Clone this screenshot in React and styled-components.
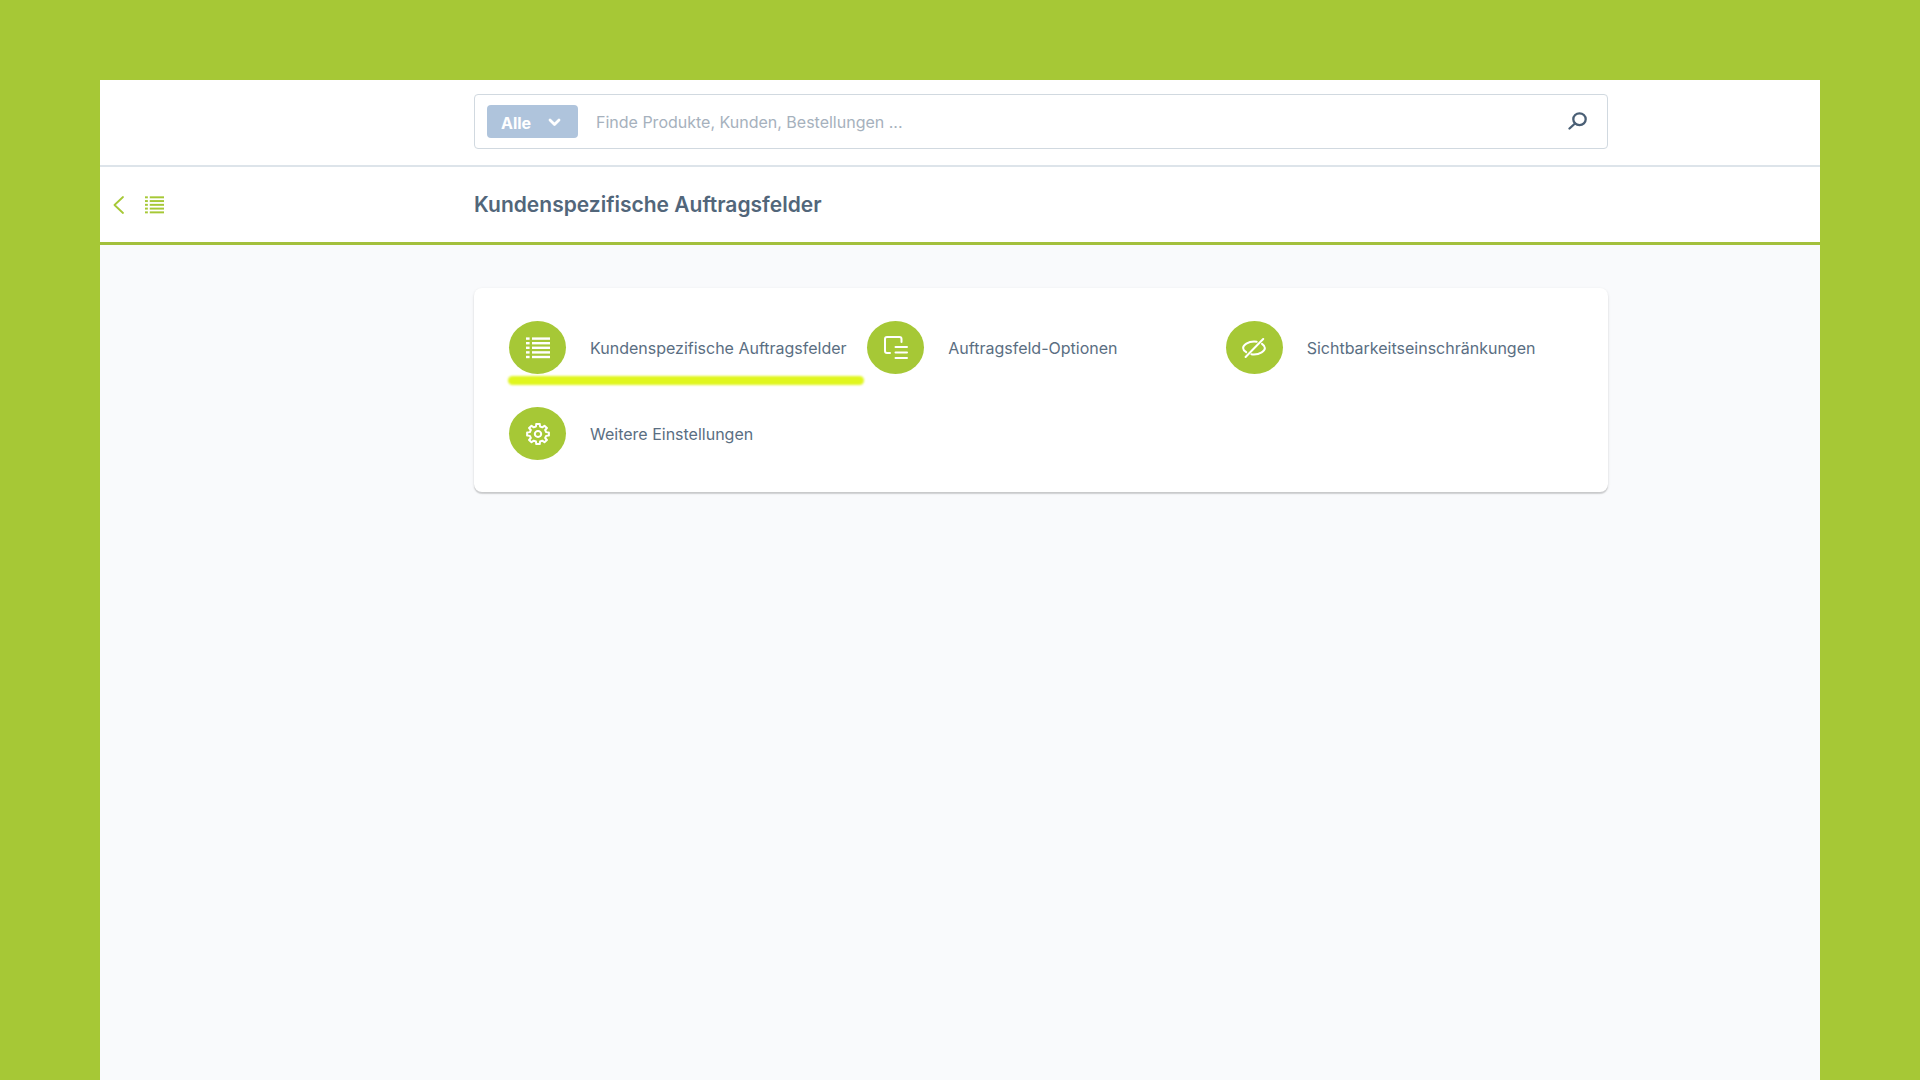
import styled, { createGlobalStyle } from 'styled-components';

const GlobalStyle = createGlobalStyle`
  * {
    box-sizing: border-box;
  }
  body {
    margin: 0;
    background-color: #a6c836;
    font-family: Inter, 'Liberation Sans', sans-serif;
    color: #52667a;
  }
`;

const Page = styled.div`
  min-height: 100vh;
  padding: 80px 100px 0;
  display: flex;
`;

const Window = styled.div`
  flex: 1;
  display: flex;
  flex-direction: column;
  background-color: #f9fafc;
`;

const Bar = styled.div`
  display: grid;
  grid-template-columns: 374px 1fr 212px;
  align-items: center;
  background-color: #ffffff;
`;

const TopBar = styled(Bar).attrs({ as: 'header' })`
  padding: 14px 0 16px;
  border-bottom: 2px solid #dde4ea;
`;

const TitleBar = styled(Bar)`
  height: 78px;
  border-bottom: 3px solid #a3c03c;
`;

const SearchForm = styled.form`
  grid-column: 2;
  height: 55px;
  padding: 0 12px;
  display: flex;
  align-items: center;
  border: 1px solid #d1d9e0;
  border-radius: 4px;
`;

const ScopeWrap = styled.label`
  position: relative;
  display: flex;
  color: #ffffff;
`;

const ScopeSelect = styled.select`
  width: 91px;
  height: 33px;
  padding: 2px 14px 0;
  appearance: none;
  border: none;
  border-radius: 4px;
  background-color: #afc4dc;
  color: inherit;
  font: 700 16px Inter, sans-serif;
`;

const ScopeArrow = styled.svg`
  position: absolute;
  top: 13px;
  right: 17px;
  pointer-events: none;
`;

const SearchInput = styled.input`
  flex: 1;
  min-width: 0;
  height: 40px;
  padding: 1px 18px 0;
  border: none;
  outline: none;
  background: none;
  color: #52667a;
  font: 400 16px Inter, sans-serif;
  &::placeholder {
    color: #a6b1bd;
    opacity: 1;
  }
`;

const IconButton = styled.button`
  display: flex;
  padding: 0;
  border: none;
  background: none;
  color: inherit;
  cursor: pointer;
`;

const SearchButton = styled(IconButton)`
  padding: 0 8px 2px;
  color: #4a5f75;
`;

const BackNav = styled.nav`
  display: flex;
  align-items: center;
  gap: 21px;
  padding-left: 13px;
  color: #a6c836;
`;

const Title = styled.h1`
  margin: 0;
  font-size: 21px;
  font-weight: 600;
  line-height: 28px;
`;

const Main = styled.main`
  display: grid;
  grid-template-columns: 374px 1fr 212px;
  padding-top: 43px;
`;

const Card = styled.section`
  grid-column: 2;
  padding: 33px 24px 32px 35px;
  display: grid;
  grid-template-columns: repeat(3, 1fr);
  row-gap: 33px;
  border-radius: 8px;
  background-color: #ffffff;
  box-shadow: 0 2px 1px rgba(0, 0, 0, 0.12), 0 1px 3px rgba(0, 0, 0, 0.12);
`;

const SettingsLink = styled.a`
  position: relative;
  display: flex;
  align-items: center;
  gap: 24px;
  color: #5a6e82;
  font-size: 16px;
  line-height: 24px;
  white-space: nowrap;
  text-decoration: none;
`;

const Circle = styled.span`
  width: 57px;
  height: 53px;
  flex-shrink: 0;
  display: flex;
  align-items: center;
  justify-content: center;
  border-radius: 50%;
  background-color: #a6c836;
  color: #ffffff;
`;

const Marker = styled.span`
  position: absolute;
  top: 55px;
  left: -1px;
  right: 3px;
  height: 9px;
  border-radius: 5px;
  background-color: #e0f61e;
  filter: blur(1px);
`;

const ListIcon = ({ width = 24, height = 22 }) => (
  <svg width={width} height={height} viewBox='0 0 24 22' preserveAspectRatio='none' fill='currentColor' aria-hidden='true'>
    {[0, 4.6, 9.2, 13.8, 18.4].map((y) => (
      <g key={y}>
        <rect x='0' y={y + 0.4} width='3.6' height='2.4' />
        <rect x='6' y={y + 0.4} width='18' height='2.4' />
      </g>
    ))}
  </svg>
);

const OptionsIcon = () => (
  <svg width='24' height='24' viewBox='0 0 24 24' fill='none' stroke='currentColor' strokeWidth='2' strokeLinecap='round' strokeLinejoin='round' aria-hidden='true'>
    <path d='M6 17H3a2 2 0 0 1-2-2V3a2 2 0 0 1 2-2h12.5a2 2 0 0 1 2 2v3' />
    <path d='M11.5 11H23M11.5 16.5H23M11.5 22H23' />
  </svg>
);

const HiddenIcon = () => (
  <svg width='24' height='20' viewBox='0 0 24 20' fill='none' stroke='currentColor' strokeWidth='2' strokeLinecap='round' strokeLinejoin='round' aria-hidden='true'>
    <path d='M3.6 19 21.2 1' />
    <path d='M4.2 14.2C2.4 13 1.1 11.3 1.1 10c0-3 5-6.5 11-6.5 1 0 1.8.1 2.6.3' />
    <path d='M20 5.9c1.8 1.2 2.9 2.8 2.9 4.1 0 3-5 6.5-10.9 6.5-1 0-1.8-.1-2.6-.3' />
  </svg>
);

const gearPath = (() => {
  const points = [];
  for (let i = 0; i < 8; i += 1) {
    [
      [-14, 7.9],
      [-9, 10.4],
      [9, 10.4],
      [14, 7.9],
    ].forEach(([offset, radius]) => {
      const angle = ((i * 45 + offset) * Math.PI) / 180;
      points.push(`${(12 + radius * 1.06 * Math.sin(angle)).toFixed(2)} ${(11 - radius * 0.98 * Math.cos(angle)).toFixed(2)}`);
    });
  }
  return `M${points.join('L')}Z`;
})();

const GearIcon = () => (
  <svg width='24' height='22' viewBox='0 0 24 22' fill='none' stroke='currentColor' strokeWidth='2' strokeLinejoin='round' aria-hidden='true'>
    <path d={gearPath} />
    <ellipse cx='12' cy='11' rx='3.2' ry='3' />
  </svg>
);

const SearchIcon = () => (
  <svg width='19' height='18' viewBox='0 0 19 18' fill='none' stroke='currentColor' strokeWidth='2.3' strokeLinecap='round' aria-hidden='true'>
    <ellipse cx='11.5' cy='7.2' rx='6.2' ry='5.9' />
    <path d='M7 11.5 1.5 16.5' />
  </svg>
);

const BackIcon = () => (
  <svg width='11' height='18' viewBox='0 0 11 18' fill='none' stroke='currentColor' strokeWidth='1.8' strokeLinecap='round' strokeLinejoin='round' aria-hidden='true'>
    <path d='M10 1 1.5 9l8.5 8' />
  </svg>
);

const settings = [
  { label: 'Kundenspezifische Auftragsfelder', Icon: ListIcon, marked: true },
  { label: 'Auftragsfeld-Optionen', Icon: OptionsIcon },
  { label: 'Sichtbarkeitseinschränkungen', Icon: HiddenIcon },
  { label: 'Weitere Einstellungen', Icon: GearIcon },
];

const App = () => (
  <>
    <GlobalStyle />
    <Page>
      <Window>
        <TopBar>
          <SearchForm role='search' onSubmit={(e) => e.preventDefault()}>
            <ScopeWrap>
              <ScopeSelect aria-label='Suchbereich'>
                <option>Alle</option>
              </ScopeSelect>
              <ScopeArrow width='13' height='9' viewBox='0 0 13 9' fill='none' stroke='currentColor' strokeWidth='2.8' strokeLinecap='round' strokeLinejoin='round'>
                <path d='M2 2l4.5 4.5L11 2' />
              </ScopeArrow>
            </ScopeWrap>
            <SearchInput type='text' aria-label='Suche' placeholder='Finde Produkte, Kunden, Bestellungen ...' />
            <SearchButton type='submit' aria-label='Suchen'>
              <SearchIcon />
            </SearchButton>
          </SearchForm>
        </TopBar>
        <TitleBar>
          <BackNav>
            <IconButton type='button' aria-label='Zurück'>
              <BackIcon />
            </IconButton>
            <ListIcon width={19} height={18} />
          </BackNav>
          <Title>Kundenspezifische Auftragsfelder</Title>
        </TitleBar>
        <Main>
          <Card>
            {settings.map(({ label, Icon, marked }) => (
              <SettingsLink key={label} href='#'>
                <Circle>
                  <Icon />
                </Circle>
                {label}
                {marked && <Marker />}
              </SettingsLink>
            ))}
          </Card>
        </Main>
      </Window>
    </Page>
  </>
);

export default App;
